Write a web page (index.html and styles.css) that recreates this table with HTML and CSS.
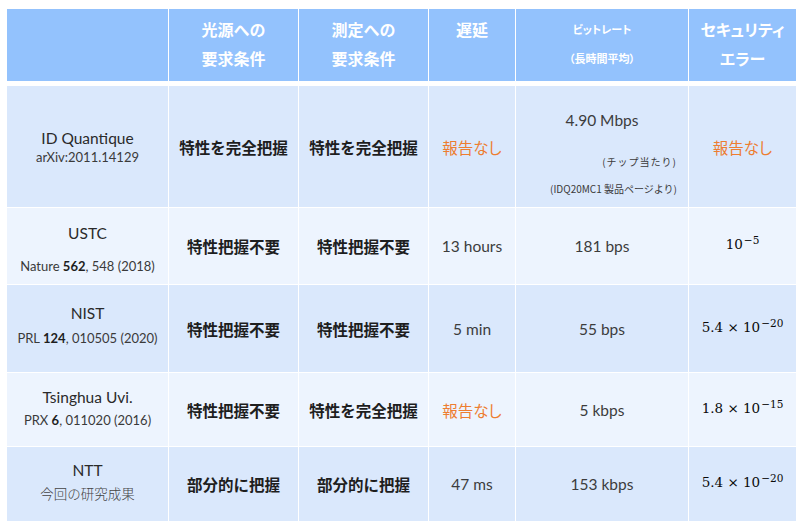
FILE: index.html
```html
<!DOCTYPE html>
<html lang="ja">
<head>
<meta charset="utf-8">
<title>QKD比較表</title>
<link rel="stylesheet" href="styles.css">
</head>
<body>
<div class="qkd">
  <div class="row head">
    <div class="cell"></div>
    <div class="cell"><span>光源への</span><span>要求条件</span></div>
    <div class="cell"><span>測定への</span><span>要求条件</span></div>
    <div class="cell"><span>遅延</span></div>
    <div class="cell small"><span>ビットレート</span><span>（長時間平均）</span></div>
    <div class="cell kata"><span>セキュリティ</span><span>エラー</span></div>
  </div>

  <div class="row r1 dark">
    <div class="cell org"><span class="name">ID Quantique</span><span class="ref">arXiv:2011.14129</span></div>
    <div class="cell req">特性を完全把握</div>
    <div class="cell req">特性を完全把握</div>
    <div class="cell none">報告なし</div>
    <div class="cell rate top">
      <span class="val main">4.90 Mbps</span>
      <span class="note n1">(チップ当たり)</span>
      <span class="note n2">(IDQ20MC1 製品ページより)</span>
    </div>
    <div class="cell none">報告なし</div>
  </div>

  <div class="row r2 light">
    <div class="cell org pt6"><span class="name">USTC</span><span class="ref wide">Nature <b>562</b>, 548 (2018)</span></div>
    <div class="cell req">特性把握不要</div>
    <div class="cell req">特性把握不要</div>
    <div class="cell val">13 hours</div>
    <div class="cell val">181 bps</div>
    <div class="cell math"><span class="expr">10<sup>−5</sup></span></div>
  </div>

  <div class="row r3 dark">
    <div class="cell org pb7"><span class="name">NIST</span><span class="ref mid">PRL <b>124</b>, 010505 (2020)</span></div>
    <div class="cell req">特性把握不要</div>
    <div class="cell req">特性把握不要</div>
    <div class="cell val">5 min</div>
    <div class="cell val">55 bps</div>
    <div class="cell math"><span class="expr">5.4 × 10<sup>−20</sup></span></div>
  </div>

  <div class="row r4 light">
    <div class="cell org pb3"><span class="name">Tsinghua Uvi.</span><span class="ref near">PRX <b>6</b>, 011020 (2016)</span></div>
    <div class="cell req">特性把握不要</div>
    <div class="cell req">特性を完全把握</div>
    <div class="cell none">報告なし</div>
    <div class="cell val">5 kbps</div>
    <div class="cell math"><span class="expr">1.8 × 10<sup>−15</sup></span></div>
  </div>

  <div class="row r5 dark">
    <div class="cell org pb6"><span class="name">NTT</span><span class="ref near jp">今回の研究成果</span></div>
    <div class="cell req">部分的に把握</div>
    <div class="cell req">部分的に把握</div>
    <div class="cell val">47 ms</div>
    <div class="cell val">153 kbps</div>
    <div class="cell math"><span class="expr">5.4 × 10<sup>−20</sup></span></div>
  </div>
</div>
</body>
</html>
```

FILE: styles.css
```css
html, body {
  margin: 0;
  padding: 0;
  background: #ffffff;
}

body {
  font-family: "Lato", "Noto Sans CJK JP", sans-serif;
  color: #333333;
}

.qkd {
  margin: 9px 0 0 7px;
  width: 789px;
  display: flex;
  flex-direction: column;
  gap: 1px;
}

.row {
  display: grid;
  grid-template-columns: 161px 129px 129px 86px 172px 107px;
  column-gap: 1px;
}

.cell {
  display: flex;
  flex-direction: column;
  align-items: center;
  justify-content: center;
  text-align: center;
}

/* header */
.head {
  height: 72px;
  margin-bottom: 4px;
}
.head .cell {
  background: #93c2fd;
  justify-content: flex-start;
  padding-top: 6px;
  color: #ffffff;
  font-family: "Noto Sans CJK JP", sans-serif;
  font-weight: 700;
  font-size: 16px;
  line-height: 29px;
}
.head .small {
  font-size: 11px;
  font-feature-settings: "palt";
}
.head .kata {
  font-feature-settings: "palt";
}

/* body rows */
.r1 { height: 121px; }
.r2 { height: 76px; }
.r3 { height: 87px; }
.r4 { height: 73px; }
.r5 { height: 74px; }

.dark .cell { background: #dae8fc; }
.light .cell { background: #edf4fe; }

.org .name {
  font-size: 15.5px;
  line-height: 20px;
  color: #2a2a2a;
}
.org .ref {
  font-size: 13px;
  line-height: 18px;
  color: #3a3a3a;
}
.org .ref b {
  font-weight: 700;
  color: #1e1e1e;
}
.org .ref.wide { margin-top: 14px; }
.org .ref.mid { margin-top: 6px; }
.org .ref.near { margin-top: 4px; }
.org .ref.jp {
  font-family: "Noto Sans CJK JP", sans-serif;
  font-size: 13.5px;
  font-weight: 300;
  color: #444444;
}
.pt6 { padding-top: 6px; }
.pb7 { padding-bottom: 7px; }
.pb3 { padding-bottom: 3px; }
.pb6 { padding-bottom: 6px; }

.req {
  font-family: "Noto Sans CJK JP", sans-serif;
  font-weight: 700;
  font-size: 15.5px;
  color: #1e1e1e;
}

.none {
  font-family: "Noto Sans CJK JP", sans-serif;
  font-size: 15.5px;
  color: #ed7d31;
  font-feature-settings: "palt";
}

.val {
  font-size: 15.5px;
  font-weight: 400;
  color: #3c3c3c;
}

.rate.top {
  justify-content: flex-start;
  padding-top: 22px;
}
.rate .main {
  line-height: 24px;
}
.rate .note {
  align-self: flex-end;
  padding-right: 11px;
  font-family: "Noto Sans CJK JP", sans-serif;
  font-size: 10px;
  line-height: 14px;
  color: #3a3a3a;
}
.rate .n1 { margin-top: 23px; letter-spacing: 1px; }
.rate .n2 { margin-top: 13px; }

.math {
  padding-bottom: 4px;
}
.math .expr {
  font-family: "DejaVu Serif", serif;
  font-size: 13.5px;
  line-height: 20px;
  color: #0a0a0a;
  white-space: nowrap;
}
.math sup {
  font-size: 10.5px;
  line-height: 0;
  vertical-align: 5px;
  margin-left: 1px;
}
```
